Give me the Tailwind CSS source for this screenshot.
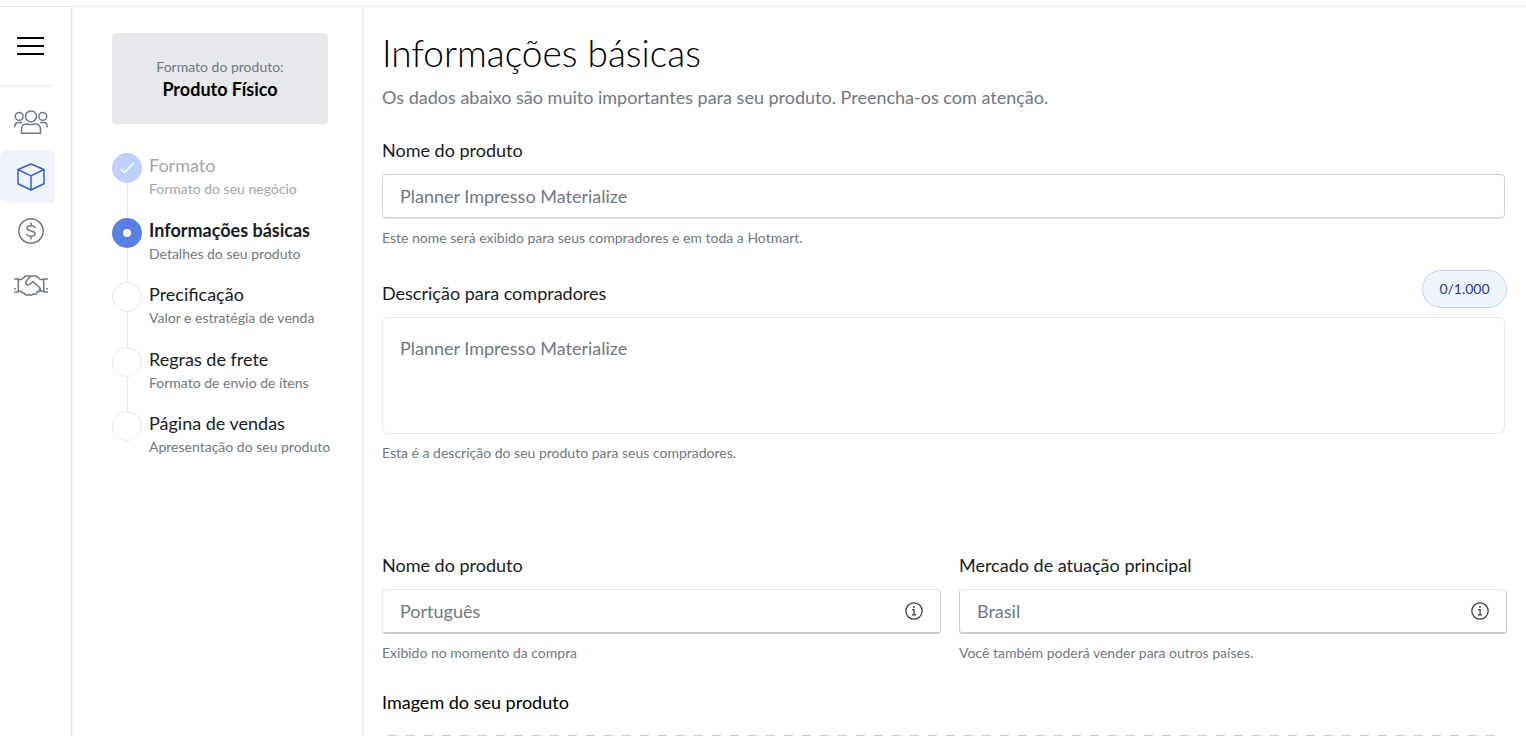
<!DOCTYPE html>
<html lang="pt-BR">
<head>
<meta charset="utf-8">
<meta name="viewport" content="width=device-width, initial-scale=1">
<title>Informações básicas</title>
<script src="https://cdn.jsdelivr.net/npm/@tailwindcss/browser@4"></script>
</head>
<body class="flex h-screen flex-col overflow-hidden bg-white pt-1.5 font-['Lato','Open_Sans',sans-serif] text-[#191c1f]">
<div class="flex min-h-0 flex-1 border-t border-[#e7e9ed]">

  <!-- Icon rail -->
  <nav aria-label="Principal" class="w-18 shrink-0 border-r border-[#dfe2e6] shadow-[1px_0_2px_rgba(0,0,0,0.05)]">
    <div class="mr-[17px] flex h-20 items-center border-b-2 border-[#f2f3f4] pl-[17px]">
      <button type="button" aria-label="Abrir menu" class="flex h-[18px] w-[27px] flex-col justify-between">
        <span class="h-0.5 w-full bg-black"></span>
        <span class="h-0.5 w-full bg-black"></span>
        <span class="h-0.5 w-full bg-black"></span>
      </button>
    </div>
    <ul class="mr-[17px] mt-2 flex flex-col gap-px text-[#707882]">
      <li>
        <a href="#" aria-label="Público" class="flex h-[54px] items-center justify-center pl-2">
          <svg class="h-6 w-[34px]" viewBox="0 0 34 24" fill="none" stroke="currentColor" stroke-width="1.500" stroke-linecap="round" stroke-linejoin="round">
            <circle cx="17" cy="6.400" r="5.500"/><circle cx="5.200" cy="6.400" r="3.900"/><circle cx="28.800" cy="6.400" r="3.900"/>
            <path d="M7.500 23.200v-3.800c0-3.200 2-5.400 4.600-5.400 1.800 0 2.800.6 4.900.6s3.100-.6 4.900-.6c2.600 0 4.600 2.200 4.600 5.400v3.800z"/>
            <path d="M.8 16.800c0-2.600 1.200-4.200 3.200-4.200h3.400M33.200 16.800c0-2.600-1.200-4.200-3.200-4.200h-3.400"/>
          </svg>
        </a>
      </li>
      <li>
        <a href="#" aria-label="Produtos" aria-current="page" class="flex h-[53px] items-center justify-center rounded-l-lg bg-[#eff4ff] pl-2 text-[#2f5fd0]">
          <svg class="h-7 w-7" viewBox="0 0 28 28" fill="none" stroke="currentColor" stroke-width="1.500" stroke-linejoin="round">
            <path d="M14 1 27 6.500v14.300L14 27 1 20.800V6.500zM1 6.500l13 6.300 13-6.300M14 12.800V27"/>
          </svg>
        </a>
      </li>
      <li>
        <a href="#" aria-label="Vendas" class="flex h-[54px] items-center justify-center pl-2">
          <svg class="h-[26px] w-[26px]" viewBox="0 0 26 26" fill="none" stroke="currentColor" stroke-width="1.500" stroke-linecap="round">
            <circle cx="13" cy="13" r="12.200"/>
            <path d="M13 5v2.800M13 18.200V21M17 9.500c-.7-1.100-2.200-1.700-4-1.700-2.300 0-4 1-4 2.500 0 1.700 1.700 2.200 4 2.700s4 1 4 2.700c0 1.500-1.700 2.500-4 2.500-1.900 0-3.500-.7-4.200-1.900"/>
          </svg>
        </a>
      </li>
      <li>
        <a href="#" aria-label="Parcerias" class="flex h-[54px] items-center justify-center pl-2">
          <svg class="h-[22px] w-[34px]" viewBox="0 0 34 22" fill="none" stroke="currentColor" stroke-width="1.500" stroke-linecap="round" stroke-linejoin="round">
            <path d="M.5 4h3.800v13H.5M33.500 4h-3.800v13h3.800M.7 13.700h.6M32.700 13.700h.6"/>
            <path d="M4.300 4.500h2.900c1.400 0 3.300-3.500 5.300-3.500h4.200M29.700 4.500h-2.900c-1.400 0-3.300-3.500-5.300-3.500h-3.200c-1.200 0-2.200.6-3 1.500l-3 3.600c-1.900 2.400 1.300 5.100 3.500 3.200l3.200-2.800 6.800 6.200c2.200 2.200-.4 4.900-2.600 3.800.2 2.400-2.200 3.500-4 2.400-1.500 2-3.300 1.700-4.400.4-1.600 1.300-3.900.7-4.400-1.100C8.600 18.400 7.500 16 5.900 16H4.300M29.700 16h-1.900c-1.300 0-1.900-.5-2.500-1.500"/>
          </svg>
        </a>
      </li>
    </ul>
  </nav>

  <!-- Progress panel -->
  <aside class="w-[292px] shrink-0 border-r-2 border-[#f0f1f3] pl-10 pr-[34px] pt-[26px]">
    <div class="flex h-[91px] flex-col items-center justify-center rounded bg-[#e7e8ec]">
      <p class="text-sm leading-5 text-[#707882]">Formato do produto:</p>
      <p class="text-lg leading-6 font-bold text-black">Produto Físico</p>
    </div>
    <ol class="-mr-4 mt-[29px]">
      <li class="flex h-16 gap-[7px] mb-px">
        <div class="flex flex-col items-center">
          <span class="flex size-[30px] shrink-0 items-center justify-center rounded-full bg-[#bfd0ff]">
            <svg class="h-3 w-3.5" viewBox="0 0 14 12" fill="none" stroke="#fff" stroke-width="1.300" stroke-linecap="round" stroke-linejoin="round"><path d="M.8 7 4.300 10.500 13.200 1.500"/></svg>
          </span>
          <span class="-mb-px w-px flex-1 bg-[#e7e8ec]"></span>
        </div>
        <div class="text-[#a0a6ae]"><p class="text-lg leading-6">Formato</p><p class="text-sm leading-6">Formato do seu negócio</p></div>
      </li>
      <li class="flex h-16 gap-[7px]">
        <div class="flex flex-col items-center">
          <span class="flex size-[30px] shrink-0 items-center justify-center rounded-full bg-[#5981e3]"><span class="size-2 rounded-full bg-white"></span></span>
          <span class="w-px flex-1 bg-[#e7e8ec]"></span>
        </div>
        <div><p class="text-lg leading-6 font-bold">Informações básicas</p><p class="text-sm leading-6 text-[#707882]">Detalhes do seu produto</p></div>
      </li>
      <li class="flex h-16 gap-[7px] mb-px">
        <div class="flex flex-col items-center">
          <span class="size-[30px] shrink-0 rounded-full border border-[#e7e8ec]"></span>
          <span class="-mb-px w-px flex-1 bg-[#e7e8ec]"></span>
        </div>
        <div><p class="text-lg leading-6">Precificação</p><p class="text-sm leading-6 text-[#707882]">Valor e estratégia de venda</p></div>
      </li>
      <li class="flex h-16 gap-[7px]">
        <div class="flex flex-col items-center">
          <span class="size-[30px] shrink-0 rounded-full border border-[#e7e8ec]"></span>
          <span class="w-px flex-1 bg-[#e7e8ec]"></span>
        </div>
        <div><p class="text-lg leading-6">Regras de frete</p><p class="text-sm leading-6 text-[#707882]">Formato de envio de ítens</p></div>
      </li>
      <li class="flex h-16 gap-[7px]">
        <div><span class="block size-[30px] rounded-full border border-[#e7e8ec]"></span></div>
        <div><p class="text-lg leading-6">Página de vendas</p><p class="text-sm leading-6 text-[#707882]">Apresentação do seu produto</p></div>
      </li>
    </ol>
  </aside>

  <!-- Form -->
  <main class="min-w-0 flex-1 overflow-y-auto pl-[18px] pr-[19px] pt-[22px] [scrollbar-width:none]">
    <h1 class="text-[37px] leading-12 font-light text-black">Informações básicas</h1>
    <p class="mt-1.5 text-lg leading-7 text-[#707882]">Os dados abaixo são muito importantes para seu produto. Preencha-os com atenção.</p>

    <form>
      <div class="mr-0.5 mt-[27px]">
        <label for="nome" class="block text-lg leading-6">Nome do produto</label>
        <input id="nome" type="text" placeholder="Planner Impresso Materialize" class="mt-3 block h-11 w-full rounded border border-[#cdd1d8] px-[17px] text-lg shadow-[0_1px_0_#e3e5e9] placeholder:text-[#707882]">
        <p class="mt-2.5 text-sm leading-5 text-[#707882]">Este nome será exibido para seus compradores e em toda a Hotmart.</p>
      </div>

      <div class="mt-[22px]">
        <div class="flex h-[38px] items-center justify-between">
          <label for="descricao" class="mt-2 text-lg leading-6">Descrição para compradores</label>
          <output for="descricao" class="flex h-[38px] w-[85px] items-center justify-center rounded-full border border-[#bfd0ff] bg-[#eff4ff] text-sm text-[#1f3a8a]">0/1.000</output>
        </div>
        <div class="mr-0.5">
          <textarea id="descricao" placeholder="Planner Impresso Materialize" class="mt-[9px] block h-[117px] w-full resize-none rounded-md border border-[#e7e8ec] px-[17px] pt-4 text-lg leading-7 placeholder:text-[#707882]"></textarea>
          <p class="mt-[9px] text-sm leading-5 text-[#707882]">Esta é a descrição do seu produto para seus compradores.</p>
        </div>
      </div>

      <div class="mt-[90px] grid grid-cols-[559fr_548fr] gap-[18px]">
        <div>
          <label for="idioma" class="block text-lg leading-6">Nome do produto</label>
          <div class="mt-3 flex h-[45px] items-center rounded border border-b-2 border-[#e7e8ec] border-r-[#c9cdd2] border-b-[#c9cdd2] pl-[17px] pr-[17px]">
            <input id="idioma" type="text" placeholder="Português" class="min-w-0 flex-1 text-lg outline-none placeholder:text-[#707882]">
            <button type="button" aria-label="Ajuda sobre o idioma" class="text-[#32373c]">
              <svg class="size-[18px]" viewBox="0 0 18 18" fill="none" stroke="currentColor" stroke-width="1.200"><circle cx="9" cy="9" r="8.200"/><path d="M7.200 7.700h1.900v5M6.900 12.900h4.300"/><circle cx="9" cy="5" r=".9" fill="currentColor" stroke="none"/></svg>
            </button>
          </div>
          <p class="mt-[9px] text-sm leading-5 text-[#707882]">Exibido no momento da compra</p>
        </div>
        <div>
          <label for="mercado" class="block text-lg leading-6">Mercado de atuação principal</label>
          <div class="mt-3 flex h-[45px] items-center rounded border border-b-2 border-[#c9cdd2] border-t-[#e7e8ec] pl-[17px] pr-[17px]">
            <input id="mercado" type="text" placeholder="Brasil" class="min-w-0 flex-1 text-lg outline-none placeholder:text-[#707882]">
            <button type="button" aria-label="Ajuda sobre o mercado" class="text-[#32373c]">
              <svg class="size-[18px]" viewBox="0 0 18 18" fill="none" stroke="currentColor" stroke-width="1.200"><circle cx="9" cy="9" r="8.200"/><path d="M7.200 7.700h1.900v5M6.900 12.900h4.300"/><circle cx="9" cy="5" r=".9" fill="currentColor" stroke="none"/></svg>
            </button>
          </div>
          <p class="mt-[9px] text-sm leading-5 text-[#707882]">Você também poderá vender para outros países.</p>
        </div>
      </div>

      <div class="mr-0.5 mt-[27px]">
        <label for="imagem" class="block text-lg leading-6 text-black">Imagem do seu produto</label>
        <div class="mt-[21px]">
          <svg class="block h-40 w-full" fill="none" stroke="#c9cdd2"><rect x="1" y=".5" width="99.800%" height="158" rx="5" stroke-dasharray="9 9"/></svg>
          <input id="imagem" type="file" class="sr-only">
        </div>
      </div>
    </form>
  </main>
</div>
</body>
</html>
